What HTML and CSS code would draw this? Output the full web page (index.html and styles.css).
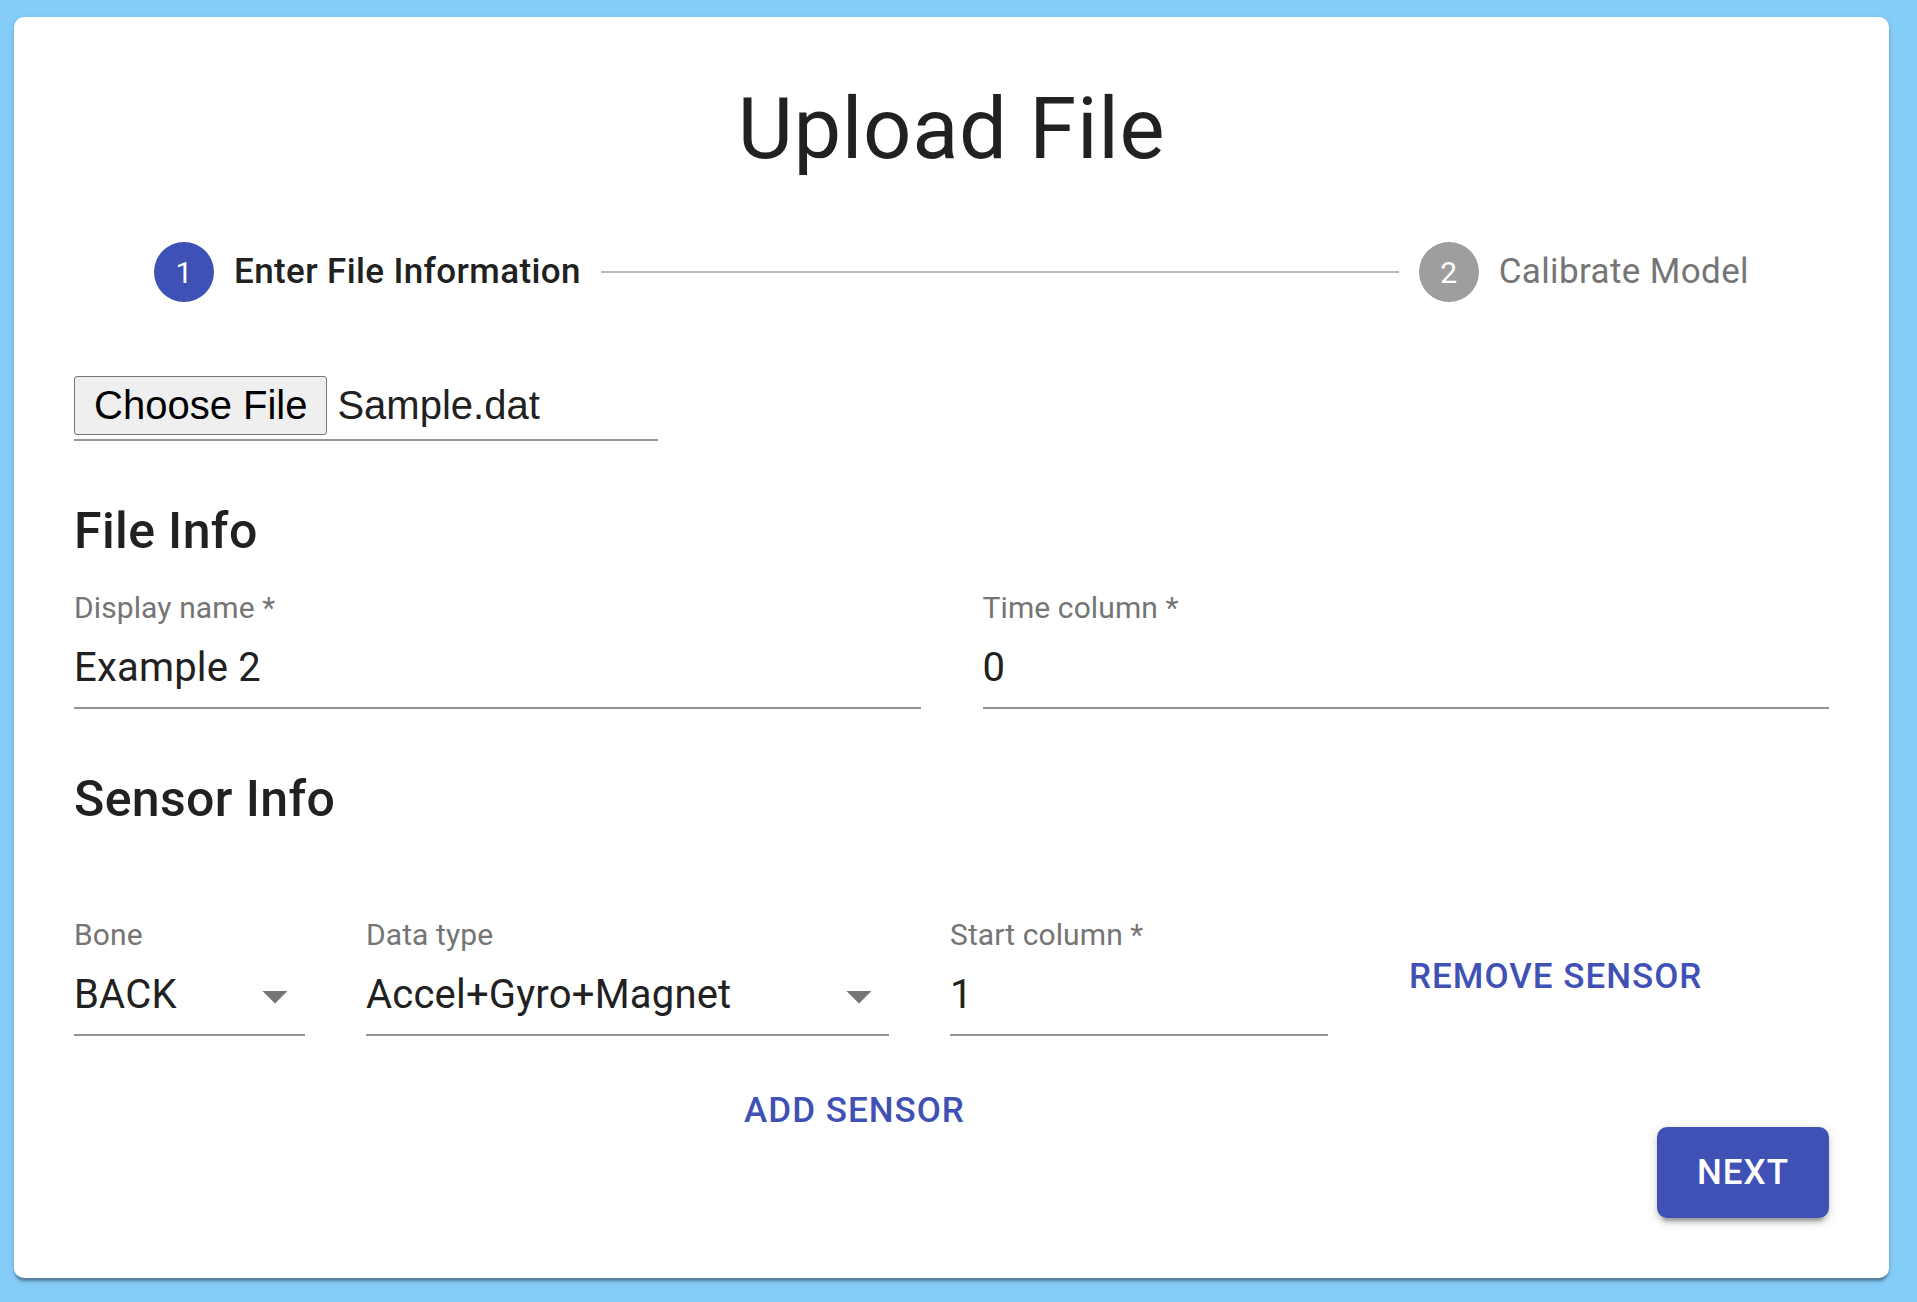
FILE: index.html
```html
<!DOCTYPE html>
<html lang="en">
<head>
<meta charset="utf-8">
<title>Upload File</title>
<link rel="stylesheet" href="styles.css">
</head>
<body>
<main class="page">
  <section class="card">
    <h1 class="title">Upload File</h1>

    <div class="stepper">
      <div class="step active">
        <span class="step-icon">1</span>
        <span class="step-label">Enter File Information</span>
      </div>
      <div class="connector"></div>
      <div class="step">
        <span class="step-icon">2</span>
        <span class="step-label">Calibrate Model</span>
      </div>
    </div>

    <div class="file-input">
      <button class="file-btn" type="button">Choose File</button>
      <span class="file-name">Sample.dat</span>
    </div>

    <h2 class="section-title">File Info</h2>
    <div class="two-col">
      <div class="field">
        <div class="label">Display name *</div>
        <div class="input">Example 2</div>
      </div>
      <div class="field">
        <div class="label">Time column *</div>
        <div class="input">0</div>
      </div>
    </div>

    <h2 class="section-title sensor">Sensor Info</h2>
    <div class="sensor-row">
      <div class="field bone">
        <div class="label">Bone</div>
        <div class="input select">BACK
          <svg class="arrow" viewBox="0 0 24 24"><path d="M7 10l5 5 5-5z"/></svg>
        </div>
      </div>
      <div class="field dtype">
        <div class="label">Data type</div>
        <div class="input select">Accel+Gyro+Magnet
          <svg class="arrow" viewBox="0 0 24 24"><path d="M7 10l5 5 5-5z"/></svg>
        </div>
      </div>
      <div class="field startcol">
        <div class="label">Start column *</div>
        <div class="input">1</div>
      </div>
      <button class="text-btn" type="button">Remove Sensor</button>
    </div>

    <div class="actions">
      <div class="add-wrap">
        <button class="text-btn" type="button">Add Sensor</button>
      </div>
      <button class="contained-btn" type="button">Next</button>
    </div>
  </section>
</main>
</body>
</html>
```

FILE: styles.css
```css
html, body {
  margin: 0;
  padding: 0;
}

body {
  background: #85cdf9;
  font-family: Roboto, "Noto Sans", sans-serif;
  color: #212121;
}

.page {
  padding: 17px 28px 24px 14px;
}

.card {
  background: #ffffff;
  border-radius: 10px;
  box-shadow: 0 5px 2.5px -2.5px rgba(0, 0, 0, 0.2),
              0 2.5px 2.5px 0 rgba(0, 0, 0, 0.14),
              0 2.5px 7.5px 0 rgba(0, 0, 0, 0.12);
  padding: 60px;
}

.title {
  margin: 0;
  text-align: center;
  font-size: 85px;
  font-weight: 400;
  line-height: 105px;
  letter-spacing: 0.00735em;
  color: #212121;
}

/* Stepper */
.stepper {
  display: flex;
  align-items: center;
  padding: 60px;
}

.step {
  display: flex;
  align-items: center;
  padding: 0 20px;
}

.step-icon {
  width: 60px;
  height: 60px;
  border-radius: 50%;
  background: #9e9e9e;
  color: #ffffff;
  font-size: 30px;
  display: flex;
  align-items: center;
  justify-content: center;
  flex-shrink: 0;
}

.step.active .step-icon {
  background: #3f51b5;
}

.step-label {
  padding-left: 20px;
  font-size: 35px;
  line-height: 50px;
  letter-spacing: 0.01071em;
  color: #757575;
}

.step.active .step-label {
  color: #212121;
  font-weight: 500;
}

.connector {
  flex: 1;
  border-top: 2px solid #bdbdbd;
}

/* File input */
.file-input {
  display: flex;
  align-items: center;
  width: 584px;
  box-sizing: border-box;
  padding: 14px 0 4px;
  border-bottom: 2px solid #949494;
}

.file-btn {
  font-family: "Liberation Sans", Arial, sans-serif;
  font-size: 40px;
  height: 59px;
  padding: 0 19px;
  background: #efefef;
  border: 1px solid #767676;
  border-radius: 3px;
  color: #000000;
  margin: 0 10px 0 0;
}

.file-name {
  font-family: "Liberation Sans", Arial, sans-serif;
  font-size: 40px;
  color: #212121;
}

/* Sections */
.section-title {
  margin: 60px 0 28px;
  font-size: 50px;
  font-weight: 500;
  line-height: 60px;
  letter-spacing: 0.0075em;
  color: #212121;
}

.section-title.sensor {
  margin-top: 60px;
  margin-bottom: 87px;
}

.two-col {
  display: grid;
  grid-template-columns: 1fr 1fr;
  column-gap: 62px;
}

.field .label {
  height: 40px;
  box-sizing: border-box;
  padding-top: 4px;
  font-size: 30px;
  line-height: 30px;
  letter-spacing: 0.1px;
  color: #757575;
}

.input {
  position: relative;
  height: 80px;
  box-sizing: border-box;
  padding-top: 15px;
  font-size: 40px;
  line-height: 47px;
  letter-spacing: 0.2px;
  color: #212121;
  border-bottom: 2px solid #949494;
  white-space: nowrap;
}

.select {
  padding-right: 60px;
}

.arrow {
  position: absolute;
  right: 0;
  top: 10px;
  width: 60px;
  height: 60px;
  fill: #757575;
}

.sensor-row {
  display: flex;
  align-items: center;
  gap: 61px;
}

.field.bone {
  width: 231px;
}

.field.dtype {
  width: 523px;
}

.field.startcol {
  width: 378px;
}

/* Buttons */
.text-btn {
  font-family: Roboto, "Noto Sans", sans-serif;
  font-size: 35px;
  font-weight: 500;
  line-height: 61px;
  letter-spacing: 0.02857em;
  text-transform: uppercase;
  color: #3f51b5;
  background: none;
  border: 0;
  border-radius: 10px;
  padding: 15px 20px;
}

.actions {
  display: flex;
  align-items: flex-start;
  gap: 22px;
  margin-top: 29px;
}

.add-wrap {
  flex: 1;
  display: flex;
  justify-content: center;
}

.contained-btn {
  margin-top: 62px;
  font-family: Roboto, "Noto Sans", sans-serif;
  font-size: 35px;
  font-weight: 500;
  line-height: 61px;
  letter-spacing: 0.02857em;
  text-transform: uppercase;
  color: #ffffff;
  background: #3f51b5;
  border: 0;
  border-radius: 10px;
  padding: 15px 40px;
  box-shadow: 0 7.5px 2.5px -5px rgba(0, 0, 0, 0.2),
              0 5px 5px 0 rgba(0, 0, 0, 0.14),
              0 2.5px 12.5px 0 rgba(0, 0, 0, 0.12);
}
```
